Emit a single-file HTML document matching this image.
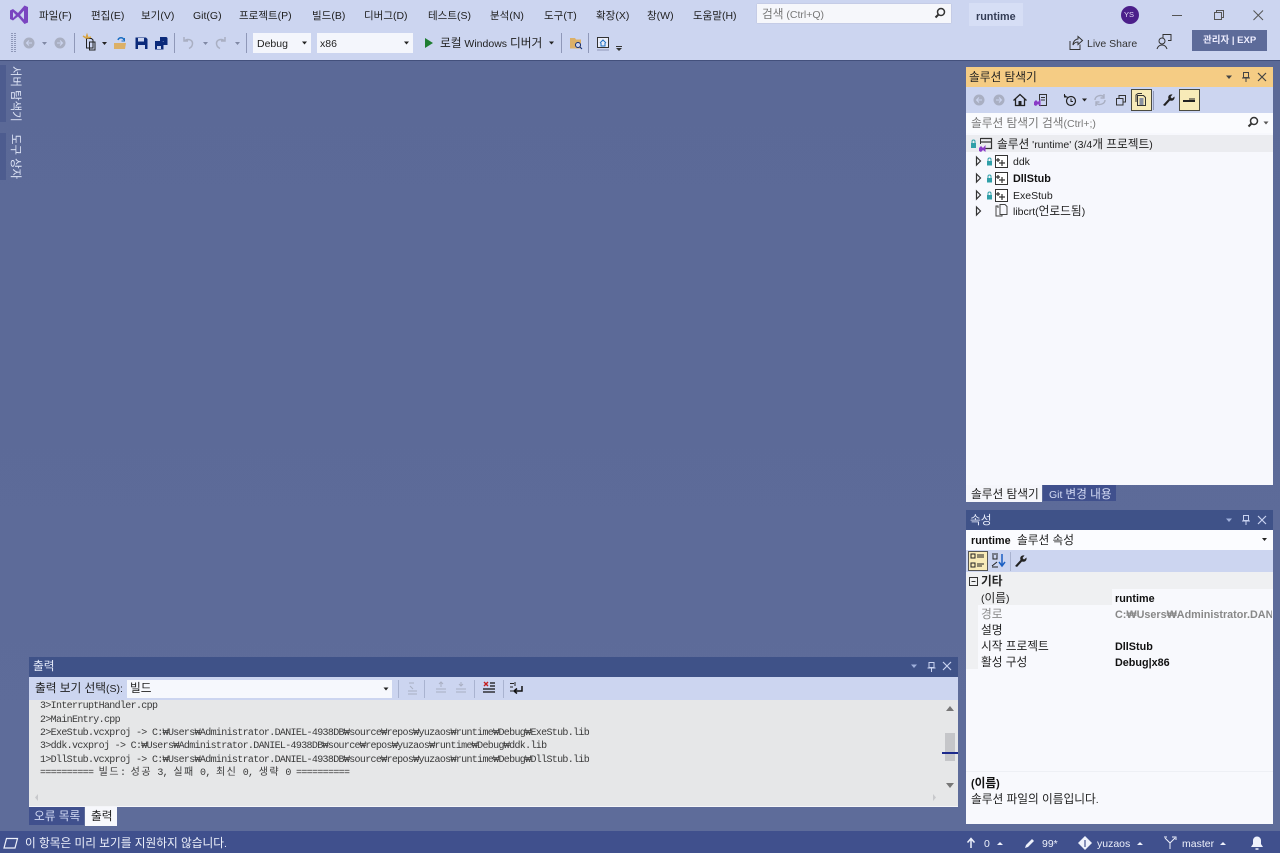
<!DOCTYPE html>
<html lang="ko"><head><meta charset="utf-8"><title>runtime</title>
<style>
html,body{margin:0;padding:0}
body{position:relative;width:1280px;height:853px;overflow:hidden;background:#5d6b99;font-family:"Liberation Sans","Noto Sans CJK KR",sans-serif;font-size:10.5px;color:#1e1e1e}
.b{position:absolute}
.t{position:absolute;white-space:nowrap;line-height:16px;height:16px;margin-top:1px}
.bold{font-weight:bold;font-size:10.8px}
em{font-style:normal;font-size:11.7px}
.m{position:absolute;left:40px;margin-top:1px;white-space:nowrap;font-family:"Liberation Mono","Noto Sans CJK KR",monospace;font-size:10px;letter-spacing:-.67px;line-height:13px;height:13px;color:#3a3a3a}
.m i{font-style:normal;letter-spacing:1.47px}
svg{position:absolute;left:0;top:0}
.v{writing-mode:vertical-rl;text-orientation:sideways;height:auto;width:16px;color:#dfe5f7;margin-top:0;font-size:11.4px}
</style></head><body>

<div class="b" style="left:0;top:0;width:1280px;height:60px;background:#ccd5f0"></div>
<div class="b" style="left:0;top:60px;width:1280px;height:1px;background:#43507c"></div>
<div class="b" style="left:0;top:61px;width:1280px;height:770px;background:linear-gradient(#5b6997,#5e6c9a)"></div>

<span class="t" style="left:39px;top:7px">파일(F)</span>
<span class="t" style="left:91px;top:7px">편집(E)</span>
<span class="t" style="left:141px;top:7px">보기(V)</span>
<span class="t" style="left:193px;top:7px">Git(G)</span>
<span class="t" style="left:239px;top:7px">프로젝트(P)</span>
<span class="t" style="left:312px;top:7px">빌드(B)</span>
<span class="t" style="left:364px;top:7px">디버그(D)</span>
<span class="t" style="left:428px;top:7px">테스트(S)</span>
<span class="t" style="left:490px;top:7px">분석(N)</span>
<span class="t" style="left:544px;top:7px">도구(T)</span>
<span class="t" style="left:596px;top:7px">확장(X)</span>
<span class="t" style="left:647px;top:7px">창(W)</span>
<span class="t" style="left:693px;top:7px">도움말(H)</span>

<div class="b" style="left:757px;top:4px;width:194px;height:19px;background:#f6f7fb;box-shadow:0 0 1px #aab"></div>
<span class="t" style="left:762px;top:6px;color:#777"><em>검색</em> (Ctrl+Q)</span>
<div class="b" style="left:969px;top:3px;width:54px;height:23px;background:#d6def5"></div>
<span class="t bold" style="left:976px;top:8px;color:#333c55">runtime</span>
<div class="b" style="left:1121px;top:6px;width:18px;height:18px;border-radius:9px;background:#4b1f8a"></div>
<span class="t" style="left:1124px;top:6px;font-size:7.500px;color:#e4dcf5">YS</span>

<div class="b" style="left:253px;top:33px;width:58px;height:20px;background:#f4f6fc"></div>
<span class="t" style="left:257px;top:35px">Debug</span>
<div class="b" style="left:317px;top:33px;width:96px;height:20px;background:#f4f6fc"></div>
<span class="t" style="left:320px;top:35px">x86</span>
<span class="t" style="left:440px;top:35px"><em>로컬</em> Windows <em>디버거</em></span>
<span class="t" style="left:1087px;top:35px;color:#333">Live Share</span>
<div class="b" style="left:1192px;top:30px;width:75px;height:21px;background:#5d6b99"></div>
<span class="t" style="left:1203px;top:32px;font-size:9.500px;font-weight:bold;color:#eef">관리자 | EXP</span>

<!-- left tabs -->
<div class="b" style="left:0;top:65px;width:6px;height:57px;background:#4d5c8f"></div>
<div class="b" style="left:0;top:133px;width:6px;height:47px;background:#4d5c8f"></div>
<span class="t v" style="left:7px;top:66px">서버 탐색기</span>
<span class="t v" style="left:7px;top:134px">도구 상자</span>

<!-- solution explorer -->
<div class="b" style="left:966px;top:67px;width:307px;height:20px;background:#f5cc84"></div>
<span class="t" style="left:969px;top:69px;color:#222"><em>솔루션 탐색기</em></span>
<div class="b" style="left:966px;top:87px;width:307px;height:26px;background:#ccd5f0"></div>
<div class="b" style="left:966px;top:113px;width:307px;height:20px;background:#fafbfe"></div>
<span class="t" style="left:971px;top:115px;color:#777"><em>솔루션 탐색기 검색</em>(Ctrl+;)</span>
<div class="b" style="left:966px;top:133px;width:307px;height:352px;background:#f7f8fd"></div>
<div class="b" style="left:966px;top:135px;width:307px;height:17px;background:#ebecf0"></div>
<span class="t" style="left:997px;top:136px"><em>솔루션</em> 'runtime' (3/4<em>개 프로젝트</em>)</span>
<span class="t" style="left:1013px;top:153px">ddk</span>
<span class="t bold" style="left:1013px;top:170px;color:#111">DllStub</span>
<span class="t" style="left:1013px;top:187px">ExeStub</span>
<span class="t" style="left:1013px;top:203px">libcrt(<em>언로드됨</em>)</span>
<div class="b" style="left:966px;top:485px;width:76px;height:17px;background:#f5f6fb"></div>
<span class="t" style="left:971px;top:486px"><em>솔루션 탐색기</em></span>
<div class="b" style="left:1043px;top:485px;width:73px;height:16px;background:#40508d"></div>
<span class="t" style="left:1049px;top:486px;color:#d5dcf5">Git <em>변경 내용</em></span>

<!-- properties -->
<div class="b" style="left:966px;top:510px;width:307px;height:20px;background:#3f5288"></div>
<span class="t" style="left:970px;top:512px;color:#e6ebfa"><em>속성</em></span>
<div class="b" style="left:966px;top:530px;width:307px;height:20px;background:#fbfcff"></div>
<span class="t bold" style="left:971px;top:532px;color:#111">runtime</span>
<span class="t" style="left:1017px;top:532px"><em>솔루션 속성</em></span>
<div class="b" style="left:966px;top:550px;width:307px;height:22px;background:#ccd5f0"></div>
<div class="b" style="left:966px;top:572px;width:307px;height:252px;background:#f8f9fd"></div>
<div class="b" style="left:966px;top:572px;width:307px;height:17px;background:#eff0f2"></div>
<div class="b" style="left:966px;top:589px;width:12px;height:80px;background:#eff0f2"></div>
<div class="b" style="left:978px;top:589px;width:134px;height:16px;background:#eff0f2"></div>
<div class="b" style="left:966px;top:771px;width:307px;height:1px;background:#eef0f5"></div>
<span class="t bold" style="left:981px;top:573px;color:#222"><em>기타</em></span>
<span class="t" style="left:981px;top:590px">(<em>이름</em>)</span>
<span class="t" style="left:981px;top:606px;color:#888"><em>경로</em></span>
<span class="t" style="left:981px;top:622px"><em>설명</em></span>
<span class="t" style="left:981px;top:638px"><em>시작 프로젝트</em></span>
<span class="t" style="left:981px;top:654px"><em>활성 구성</em></span>
<span class="t bold" style="left:1115px;top:590px;color:#111">runtime</span>
<div class="b" style="left:1115px;top:606px;width:157px;height:18px;overflow:hidden"><span class="t bold" style="left:0;top:0;color:#888">C:₩Users₩Administrator.DANIEL-4938DB</span></div>
<span class="t bold" style="left:1115px;top:638px;color:#111">DllStub</span>
<span class="t bold" style="left:1115px;top:654px;color:#111">Debug|x86</span>
<span class="t bold" style="left:971px;top:775px;color:#111">(<em>이름</em>)</span>
<span class="t" style="left:971px;top:791px"><em>솔루션 파일의 이름입니다</em>.</span>

<!-- output -->
<div class="b" style="left:29px;top:657px;width:929px;height:20px;background:#3f5288"></div>
<span class="t" style="left:33px;top:658px;color:#e6ebfa"><em>출력</em></span>
<div class="b" style="left:29px;top:677px;width:929px;height:23px;background:#ccd5f0"></div>
<span class="t" style="left:35px;top:680px"><em>출력 보기 선택</em>(S):</span>
<div class="b" style="left:127px;top:680px;width:265px;height:18px;background:#f6f8fd"></div>
<span class="t" style="left:130px;top:680px"><em>빌드</em></span>
<div class="b" style="left:29px;top:700px;width:929px;height:106px;background:#e6e7e8"></div>
<span class="m" style="top:699px">3&gt;InterruptHandler.cpp</span>
<span class="m" style="top:713px">2&gt;MainEntry.cpp</span>
<span class="m" style="top:726px">2&gt;ExeStub.vcxproj -&gt; C:₩Users₩Administrator.DANIEL-4938DB₩source₩repos₩yuzaos₩runtime₩Debug₩ExeStub.lib</span>
<span class="m" style="top:739px">3&gt;ddk.vcxproj -&gt; C:₩Users₩Administrator.DANIEL-4938DB₩source₩repos₩yuzaos₩runtime₩Debug₩ddk.lib</span>
<span class="m" style="top:753px">1&gt;DllStub.vcxproj -&gt; C:₩Users₩Administrator.DANIEL-4938DB₩source₩repos₩yuzaos₩runtime₩Debug₩DllStub.lib</span>
<span class="m" style="top:766px">========== <i>빌드</i>: <i>성공</i> 3, <i>실패</i> 0, <i>최신</i> 0, <i>생략</i> 0 ==========</span>
<div class="b" style="left:29px;top:806px;width:929px;height:1px;background:#f4f5f8"></div>
<div class="b" style="left:945px;top:733px;width:10px;height:28px;background:#c5c6c9"></div>
<div class="b" style="left:942px;top:752px;width:16px;height:2px;background:#1c2a8c"></div>
<div class="b" style="left:29px;top:807px;width:55px;height:18px;background:#40508d"></div>
<span class="t" style="left:34px;top:808px;color:#d5dcf5"><em>오류 목록</em></span>
<div class="b" style="left:85px;top:807px;width:32px;height:19px;background:#f7f8fc"></div>
<span class="t" style="left:91px;top:808px"><em>출력</em></span>

<!-- status -->
<div class="b" style="left:0;top:831px;width:1280px;height:22px;background:#40508d"></div>
<span class="t" style="left:25px;top:835px;color:#eef1fb"><em>이 항목은 미리 보기를 지원하지 않습니다</em>.</span>
<span class="t" style="left:984px;top:835px;color:#eef1fb">0</span>
<span class="t" style="left:1042px;top:835px;color:#eef1fb">99*</span>
<span class="t" style="left:1097px;top:835px;color:#eef1fb">yuzaos</span>
<span class="t" style="left:1182px;top:835px;color:#eef1fb">master</span>

<svg width="1280" height="853" viewBox="0 0 1280 853" fill="none">
<!-- VS logo -->
<path d="M10 10.500l3-1.500 5 4 6.500-7.500 3.500 1.500v15.500l-3.500 1.500-6.500-7.500-5 4-3-1.500z" fill="#7a45c0"/>
<path d="M13 12v6l3-3zM24 10.500l-4 4.500 4 4.500z" fill="#ccd5f0"/>
<!-- search -->
<circle cx="941" cy="12" r="3.500" stroke="#333" stroke-width="1.500"/><path d="M938.500 14.500l-3 3" stroke="#333" stroke-width="2"/>
<!-- window buttons -->
<path d="M1172 15.500h10" stroke="#555" stroke-width="1"/>
<path d="M1214.500 12.500h7v7h-7zM1216.500 12.500v-2h7v7h-2" stroke="#555"/>
<path d="M1253.500 10.500l9.500 9.500M1263 10.500l-9.500 9.500" stroke="#555" stroke-width="1"/>
<!-- toolbar -->
<path d="M12 33v20M15 33v20" stroke="#8f98b8" stroke-width="2" stroke-dasharray="1 1"/>
<circle cx="29" cy="43" r="5.500" fill="#a9afc2"/><path d="M32 43h-5M29 40.500l-2.500 2.500 2.500 2.500" stroke="#ccd5f0"/>
<path d="M42 42h5l-2.500 3z" fill="#8089a5"/>
<circle cx="60" cy="43" r="5.500" fill="#a9afc2"/><path d="M57 43h5M60 40.500l2.500 2.500-2.500 2.500" stroke="#ccd5f0"/>
<path d="M74.500 33v20M174.500 33v20M246.500 33v20M561.500 33v20M588.500 33v20" stroke="#8f98b8"/>
<path d="M86.500 38.500h5l1.500 1.500v8h-6.500zM89.500 42h5.500v8h-5.500z" stroke="#222"/><path d="M83 36l3 2 1-3 1 3 3-1" stroke="#d9a441" stroke-width="1.500"/>
<path d="M102 42h5l-2.500 3z" fill="#222"/>
<path d="M114 43h12l-1 6h-11z" fill="#dcb067"/><path d="M118 40c1-3 5-3 6 0" stroke="#1b6ec2" stroke-width="1.500"/><path d="M124.500 38v3h-3" stroke="#1b6ec2"/>
<path d="M135.500 37.500h10.500l1.500 1.500v10h-12z" fill="#0b2a7a"/><path d="M138 38h6v3.500h-6zM138 45h7v4h-7z" fill="#ccd5f0"/>
<path d="M155 41h7.500l1 1v7.500H155z" fill="#0b2a7a"/><path d="M160 37h6.500l1 1v7h-4v-4h-3.500z" fill="#0b2a7a"/><path d="M157 46h4v3h-4z" fill="#ccd5f0"/>
<path d="M184 37v4h4M184.500 41c2-2.500 8-2 8 2.500 0 2.500-1.500 4-3.500 5" stroke="#a9afc2" stroke-width="1.500"/>
<path d="M203 42h5l-2.500 3z" fill="#8089a5"/>
<path d="M225 37v4h-4M224.500 41c-2-2.500-8-2-8 2.500 0 2.500 1.500 4 3.500 5" stroke="#a9afc2" stroke-width="1.500"/>
<path d="M235 42h5l-2.500 3z" fill="#8089a5"/>
<path d="M302 41.500h5l-2.500 3zM404 41.500h5l-2.500 3zM549 41.500h5l-2.500 3z" fill="#222"/>
<path d="M425 38l8 5-8 5z" fill="#1e7d32"/>
<path d="M570 38h5l1 1.500h5v9h-11z" fill="#dcb067"/><circle cx="578" cy="45" r="2.500" stroke="#0b2a7a" fill="#ccd5f0"/><path d="M580 47l2 2" stroke="#0b2a7a"/>
<path d="M597.500 37.500h11v10h-11z" stroke="#333" fill="#e9edf9"/><path d="M600 43l3-3 3 3M601 43v3h4v-3" stroke="#1b6ec2"/><path d="M597 50h12" stroke="#8f98b8"/>
<path d="M616 46.500h6" stroke="#333"/><path d="M616 48h6l-3 3z" fill="#333"/>
<!-- live share -->
<path d="M1070 41v8.500h10v-5M1073 45c0-4 3-6 5-6v-2.500l4.500 4-4.500 4V42c-2 0-4 1-5 3z" stroke="#333"/>
<circle cx="1162" cy="41" r="3" stroke="#333"/><path d="M1157 49c1-3 3-4 5-4s4 1 5 4M1163 38v-3.500h8v6h-3" stroke="#333"/>
<!-- Solution explorer header -->
<path d="M1226 75.500h6l-3 3.500z" fill="#444"/>
<path d="M1243.500 72.500h5v5h-5zM1242 78h8M1246 78v4" stroke="#444"/>
<path d="M1258 73l8 8M1266 73l-8 8" stroke="#444" stroke-width="1.200"/>
<!-- SE toolbar -->
<circle cx="979" cy="100" r="5.500" fill="#a9afc2"/><path d="M982 100h-5M979 97.500l-2.500 2.500 2.500 2.500" stroke="#ccd5f0"/>
<circle cx="999" cy="100" r="5.500" fill="#a9afc2"/><path d="M996 100h5M999 97.500l2.500 2.500-2.500 2.500" stroke="#ccd5f0"/>
<path d="M1013.500 100.500l6.500-6 6.500 6M1015.500 99v6.500h9V99" stroke="#222" stroke-width="1.300"/><path d="M1018.500 101h3v4.500h-3z" fill="#222"/>
<path d="M1039.500 94.500h7v11h-7z" stroke="#333"/><path d="M1041 97.500h4M1041 100h4" stroke="#333"/><path d="M1034 102l2-2 2 2 2.500-3v7.500l-2.500-2.500-2 2-2-1z" fill="#8a3bc7"/>
<circle cx="1071" cy="101" r="4.500" stroke="#222" stroke-width="1.200"/><path d="M1071 98.500v3h2M1064 95l2.500 2M1064.500 94v3h3" stroke="#222"/>
<path d="M1082 98.500h5l-2.500 3z" fill="#222"/>
<path d="M1095 100c0-4 6-6 9-3M1105 100c0 4-6 6-9 3M1104 94v4h-3.500M1096 106v-4h3.500" stroke="#a9afc2" stroke-width="1.400"/>
<path d="M1116.500 98.500h6.500v6.500h-6.500zM1119 98v-2.500h6.500v6.500h-2" stroke="#333"/>
<rect x="1131.500" y="89.500" width="20" height="21" fill="#f8ebb8" stroke="#4a4a40"/>
<path d="M1137.500 95.500h6l2 2v8h-8z" stroke="#333"/><path d="M1139.500 98h4v7h-4z" fill="#8a90a0"/><path d="M1136 102v-7l2-1.500h4" stroke="#333"/>
<path d="M1153.500 91v19" stroke="#8f98b8"/>
<path d="M1163 105l5.500-6c-1-3 1-5 4-4.500l-2 2.500 1.500 1.500 2.500-2c.5 3-1.500 5-4.500 4l-5 5.500z" fill="#222"/>
<rect x="1179.500" y="89.500" width="20" height="21" fill="#f8ebb8" stroke="#4a4a40"/>
<path d="M1183 101h12" stroke="#222" stroke-width="2"/><path d="M1189 99h6" stroke="#222"/>
<!-- SE search -->
<circle cx="1254" cy="121" r="3.500" stroke="#333" stroke-width="1.500"/><path d="M1251.500 123.500l-3 3" stroke="#333" stroke-width="2"/>
<path d="M1263.500 121.500h5l-2.500 3z" fill="#555"/>
<!-- tree -->
<path d="M971 143h5v5h-5z" fill="#2f9fa8"/><path d="M972 143v-1.500a1.500 1.500 0 013 0V143" stroke="#2f9fa8"/>
<path d="M980.500 138.500h11v10h-6M980.500 142h11" stroke="#333" stroke-width="1.200"/><path d="M980.500 138v6" stroke="#333"/><path d="M979 148l2-2 2 2 2.500-3v7l-2.500-2-2 2-2-1z" fill="#8a3bc7"/>
<path d="M976.500 157l4 4-4 4zM976.500 174l4 4-4 4zM976.500 191l4 4-4 4zM976.500 207l4 4-4 4z" stroke="#333" stroke-width="1.200"/>
<path d="M987 161h5v4.500h-5zM987 178h5v4.500h-5zM987 195h5v4.500h-5z" fill="#2f9fa8"/>
<path d="M988 161v-1.500a1.500 1.500 0 013 0V161M988 178v-1.500a1.500 1.500 0 013 0V178M988 195v-1.500a1.500 1.500 0 013 0V195" stroke="#2f9fa8"/>
<g stroke="#333"><path d="M995.500 155.500h12v12h-12zM995.500 172.500h12v12h-12zM995.500 189.500h12v12h-12z" fill="#fff"/>
<path d="M998 158v4M996 160h4M1002 160v6M999 163h6M998 175v4M996 177h4M1002 177v6M999 180h6M998 192v4M996 194h4M1002 194v6M999 197h6" stroke-width="1.200"/></g>
<path d="M998 208v-2h-2v10h6v-2M1000 204.500h5l2 2v8h-7z" stroke="#444" fill="#f7f8fd"/>
<!-- properties -->
<path d="M1226 518.500h6l-3 3.500z" fill="#9fb0dc"/>
<path d="M1243.500 515.500h5v5h-5zM1242 521h8M1246 521v4" stroke="#c9d3f0"/>
<path d="M1258 516l8 8M1266 516l-8 8" stroke="#c9d3f0" stroke-width="1.200"/>
<path d="M1262 538h5l-2.500 3z" fill="#222"/>
<rect x="968.500" y="551.500" width="19" height="19" fill="#f8ebb8" stroke="#555"/>
<path d="M971 554h4v4h-4zM971 563h4v4h-4zM977 555h7M977 557h7M977 564h7M977 566h5" stroke="#222"/>
<path d="M992 554h6M992 567h6M993 555v4h4v-4M997 562l-5 4" stroke="#222"/><path d="M1002 554v11M999 562l3 4 3-4" stroke="#1b5fc2" stroke-width="1.500"/>
<path d="M1010.500 552v19" stroke="#a9b3d0"/>
<path d="M1015 566l5.500-6c-1-3 1-5 4-4.500l-2 2.500 1.500 1.500 2.500-2c.5 3-1.500 5-4.500 4l-5 5.500z" fill="#222"/>
<path d="M969.500 577.500h8v8h-8zM971.500 581.500h4" stroke="#333"/>
<!-- output header -->
<path d="M911 664.500h6l-3 3.500z" fill="#9fb0dc"/>
<path d="M929 662.500h5v5h-5zM927.500 668h8M931.500 668v4" stroke="#c9d3f0"/>
<path d="M943 662l8 8M951 662l-8 8" stroke="#c9d3f0" stroke-width="1.200"/>
<path d="M383.500 687.500h5l-2.500 3z" fill="#222"/>
<path d="M398.500 680v18M424.500 680v18M474.500 680v18M503.500 680v18" stroke="#a9b3d0"/>
<path d="M409 683h5M410 686l3 3M408 691h9M408 694h9" stroke="#a9afc2"/>
<path d="M439 684l2-2 2 2M441 682v5M436 689h10M436 692h10" stroke="#a9afc2"/>
<path d="M459 684l2 2 2-2M461 682v4M456 689h10M456 692h10" stroke="#a9afc2"/>
<path d="M484 682l4 4M488 682l-4 4" stroke="#c41e1e" stroke-width="1.400"/><path d="M490 683h5M490 686h5M483 689h12M483 692h12" stroke="#111" stroke-width="1.300"/>
<path d="M522 686v5h-7M517 688.500l-3 2.500 3 2.500" stroke="#111" stroke-width="1.500"/><path d="M510 683.500h4M510 687h3M510 691h3M515 682v4" stroke="#222"/>
<!-- scroll arrows -->
<path d="M946 711h8l-4-5z" fill="#777"/>
<path d="M946 783h8l-4 5z" fill="#777"/>
<path d="M38 794v7l-3-3.500z" fill="#c8c9cc"/>
<path d="M933 794v7l3-3.500z" fill="#c8c9cc"/>
<!-- status -->
<path d="M6.500 838.500h11l-2.500 9.500H4z" stroke="#eef1fb" stroke-width="1.200"/>
<path d="M971 848v-9M967.500 842.500l3.500-4 3.500 4" stroke="#eef1fb" stroke-width="1.500"/>
<path d="M997 845h6l-3-3z" fill="#eef1fb"/>
<path d="M1025 848l1-3 6-6 2 2-6 6z" fill="#eef1fb"/>
<path d="M1085 836l7 7-7 7-7-7z" fill="#eef1fb"/><path d="M1085 840v7" stroke="#40508d" stroke-width="1.200"/>
<path d="M1137 845h6l-3-3zM1220 845h6l-3-3z" fill="#eef1fb"/>
<path d="M1170 849v-6l-5-5M1170 843l5-5M1164 837h3M1172 837h4v3" stroke="#eef1fb"/>
<path d="M1251 847h12l-2-3v-3.500a4 4 0 00-8 0v3.500z" fill="#eef1fb"/><path d="M1255.500 849h3" stroke="#eef1fb" stroke-width="1.500"/>
</svg>
</body></html>
